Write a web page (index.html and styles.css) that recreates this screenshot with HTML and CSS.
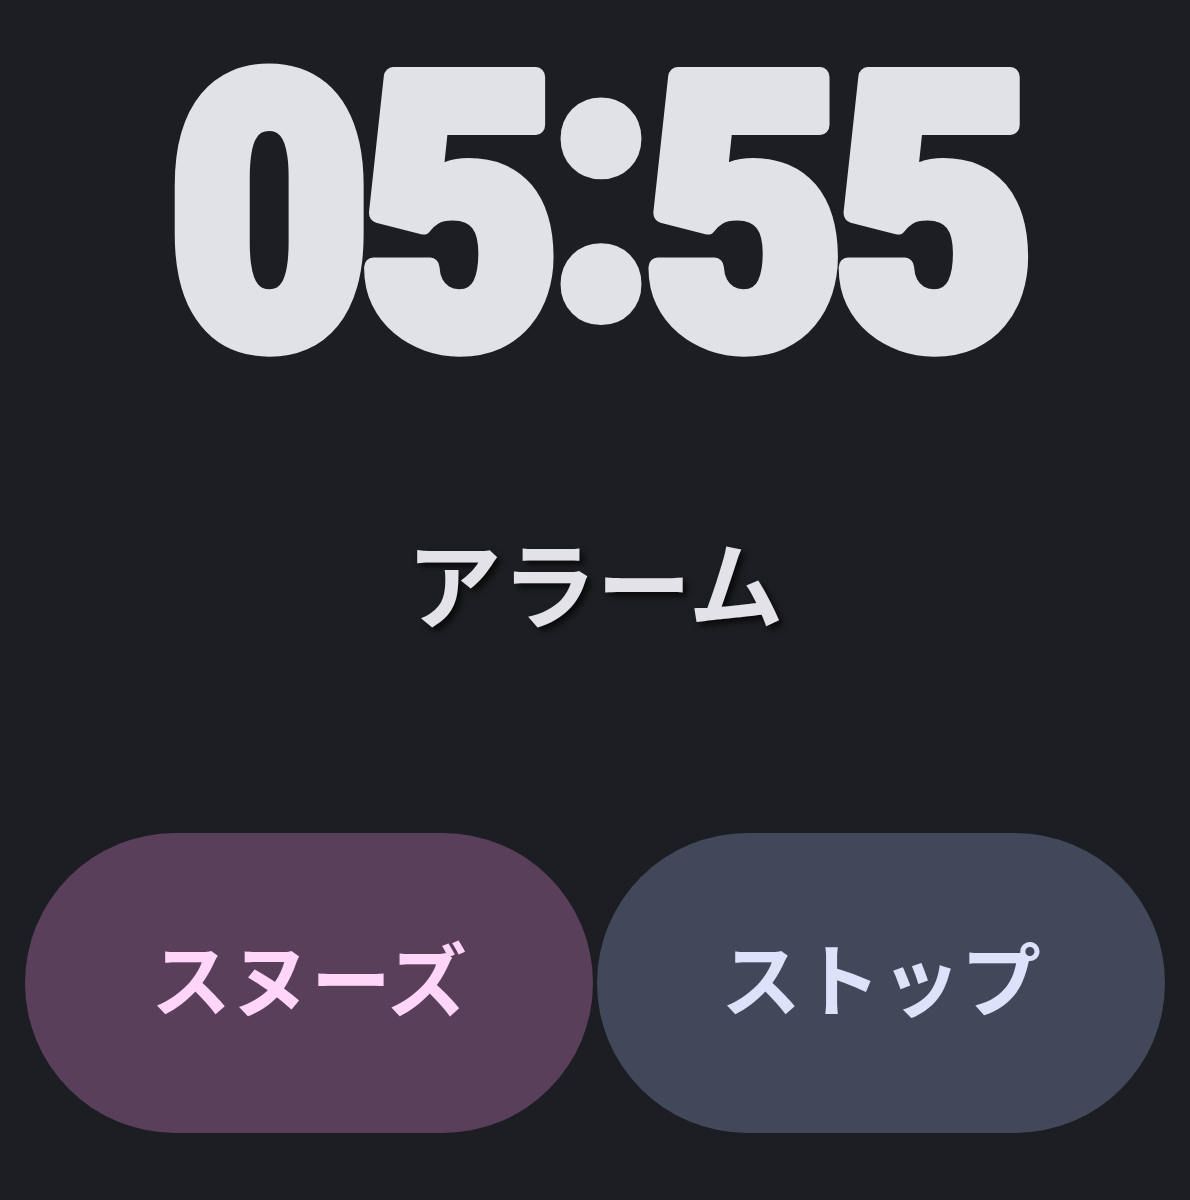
FILE: index.html
```html
<!DOCTYPE html>
<html lang="ja">
<head>
<meta charset="utf-8">
<title>アラーム</title>
<link rel="stylesheet" href="styles.css">
</head>
<body>
<main class="screen">
  <svg class="clock" viewBox="0 0 1190 500" width="1190" height="500" aria-label="05:55">
    <text class="clock-text" x="0" y="343" text-anchor="middle" transform="translate(597 0) scale(0.92 1)">05<tspan dy="-30">:</tspan><tspan dy="30">55</tspan></text>
  </svg>
  <div class="label">アラーム</div>
  <div class="actions">
    <button class="pill snooze">スヌーズ</button>
    <button class="pill stop">ストップ</button>
  </div>
</main>
</body>
</html>
```
FILE: styles.css
```css
html, body {
  margin: 0;
  padding: 0;
  background: #1d1e23;
}
body {
  width: 1190px;
  height: 1200px;
  overflow: hidden;
  font-family: "Noto Sans CJK JP", "Noto Sans", sans-serif;
}
.screen {
  display: flex;
  flex-direction: column;
  align-items: stretch;
}
.clock {
  display: block;
  width: 1190px;
  height: 500px;
}
.clock-text {
  font-family: Roboto, "Liberation Sans", sans-serif;
  font-weight: 900;
  font-size: 374px;
  letter-spacing: -10px;
  fill: #e1e2e8;
  stroke: #e1e2e8;
  stroke-width: 20px;
  stroke-linejoin: round;
}
.label {
  margin-top: 33px;
  height: 96px;
  line-height: 96px;
  font-size: 95px;
  font-weight: 700;
  text-align: center;
  color: #e2e2e8;
  text-shadow: 4px 4px 6px rgba(0, 0, 0, 0.7);
  margin-bottom: 204px;
}
.actions {
  display: flex;
  gap: 4px;
  padding: 0 25px;
}
.pill {
  flex: 1;
  height: 300px;
  border: none;
  border-radius: 150px;
  font-family: "Noto Sans CJK JP", "Noto Sans", sans-serif;
  font-size: 80px;
  font-weight: 700;
  padding: 0 0 16px;
  margin: 0;
}
.snooze {
  background: #5a3f5b;
  color: #ffd6fa;
}
.stop {
  background: #404859;
  color: #dde1f9;
}
```
